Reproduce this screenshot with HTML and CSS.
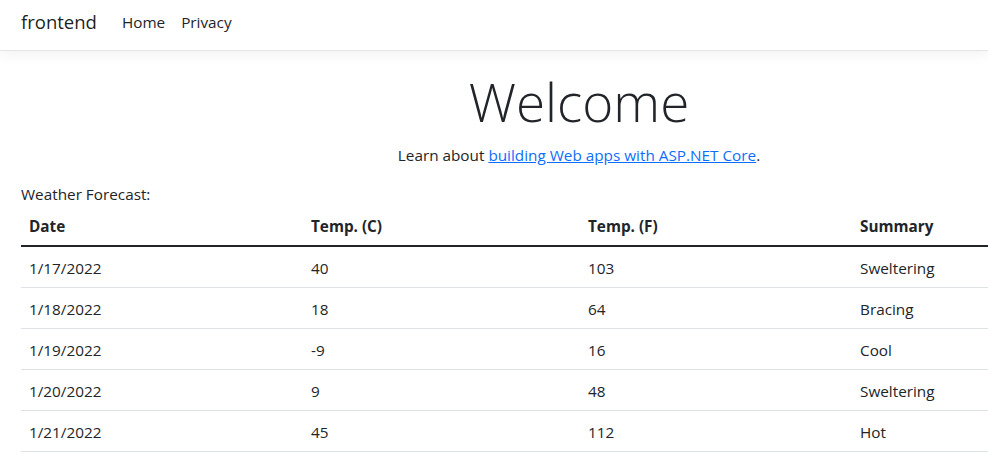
FILE: index.html
```html
<!DOCTYPE html>
<html lang="en">
<head>
<meta charset="utf-8">
<title>Home page - frontend</title>
<link rel="stylesheet" href="styles.css">
</head>
<body>
<header>
  <nav class="navbar">
    <div class="container nav-inner">
      <a class="brand" href="#">frontend</a>
      <ul class="nav-list">
        <li><a class="nav-link" href="#">Home</a></li>
        <li><a class="nav-link" href="#">Privacy</a></li>
      </ul>
    </div>
  </nav>
</header>
<main class="main">
  <div class="container">
    <div class="text-center">
      <h1 class="display">Welcome</h1>
      <p class="lead-p">Learn about <a class="link" href="#">building Web apps with ASP.NET Core</a>.</p>
    </div>
    <div class="caption">Weather Forecast:</div>
    <table class="table">
      <colgroup>
        <col class="c1"><col class="c2"><col class="c3"><col class="c4">
      </colgroup>
      <thead>
        <tr><th>Date</th><th>Temp. (C)</th><th>Temp. (F)</th><th>Summary</th></tr>
      </thead>
      <tbody>
        <tr><td>1/17/2022</td><td>40</td><td>103</td><td>Sweltering</td></tr>
        <tr><td>1/18/2022</td><td>18</td><td>64</td><td>Bracing</td></tr>
        <tr><td>1/19/2022</td><td>-9</td><td>16</td><td>Cool</td></tr>
        <tr><td>1/20/2022</td><td>9</td><td>48</td><td>Sweltering</td></tr>
        <tr><td>1/21/2022</td><td>45</td><td>112</td><td>Hot</td></tr>
      </tbody>
    </table>
  </div>
</main>
</body>
</html>
```
FILE: styles.css
```css
html, body {
  margin: 0;
  padding: 0;
}
body {
  font-family: "Open Sans", "Noto Sans", sans-serif;
  font-size: 15.3px;
  line-height: 24px;
  color: #212529;
  background: #fff;
  overflow: hidden;
  width: 988px;
  height: 467px;
}
.container {
  box-sizing: border-box;
  width: 1140px;
  margin-left: 9px;
  padding: 0 12px;
}
header {
  width: 988px;
  overflow: hidden;
  padding-bottom: 15px;
}
.navbar {
  height: 50px;
  border-bottom: 1px solid #e5e5e5;
  box-shadow: 0 4px 12px rgba(0, 0, 0, 0.05);
  background: #fff;
}
.nav-inner {
  display: flex;
  align-items: center;
  height: 50px;
}
.brand {
  font-size: 18.5px;
  line-height: 30px;
  color: rgba(0, 0, 0, 0.9);
  text-decoration: none;
  margin-right: 17px;
  margin-top: -6px;
}
.nav-list {
  display: flex;
  list-style: none;
  margin: 0;
  padding: 0;
  margin-top: -6px;
}
.nav-link {
  display: block;
  padding: 0 8px;
  color: #212529;
  text-decoration: none;
}
.main {
  width: 988px;
  overflow: hidden;
}
.text-center {
  text-align: center;
}
.display {
  font-size: 53px;
  font-weight: 300;
  line-height: 67px;
  margin: 2px 0 8px;
}
.lead-p {
  margin: 0 0 14px;
}
.link {
  color: #0d6efd;
  text-decoration: underline;
}
.caption {
  line-height: 24px;
  padding-top: 1px;
  margin-bottom: -1px;
}
.table {
  width: 100%;
  border-collapse: collapse;
  table-layout: fixed;
}
.c1 { width: 282px; }
.c2 { width: 277px; }
.c3 { width: 272px; }
.c4 { width: 285px; }
.table th,
.table td {
  text-align: left;
  padding: 9px 8px 7px;
  line-height: 24px;
  vertical-align: top;
  border-bottom: 1px solid #dee2e6;
}
.table th {
  font-weight: 700;
  border-bottom: 2px solid #212529;
}
```
